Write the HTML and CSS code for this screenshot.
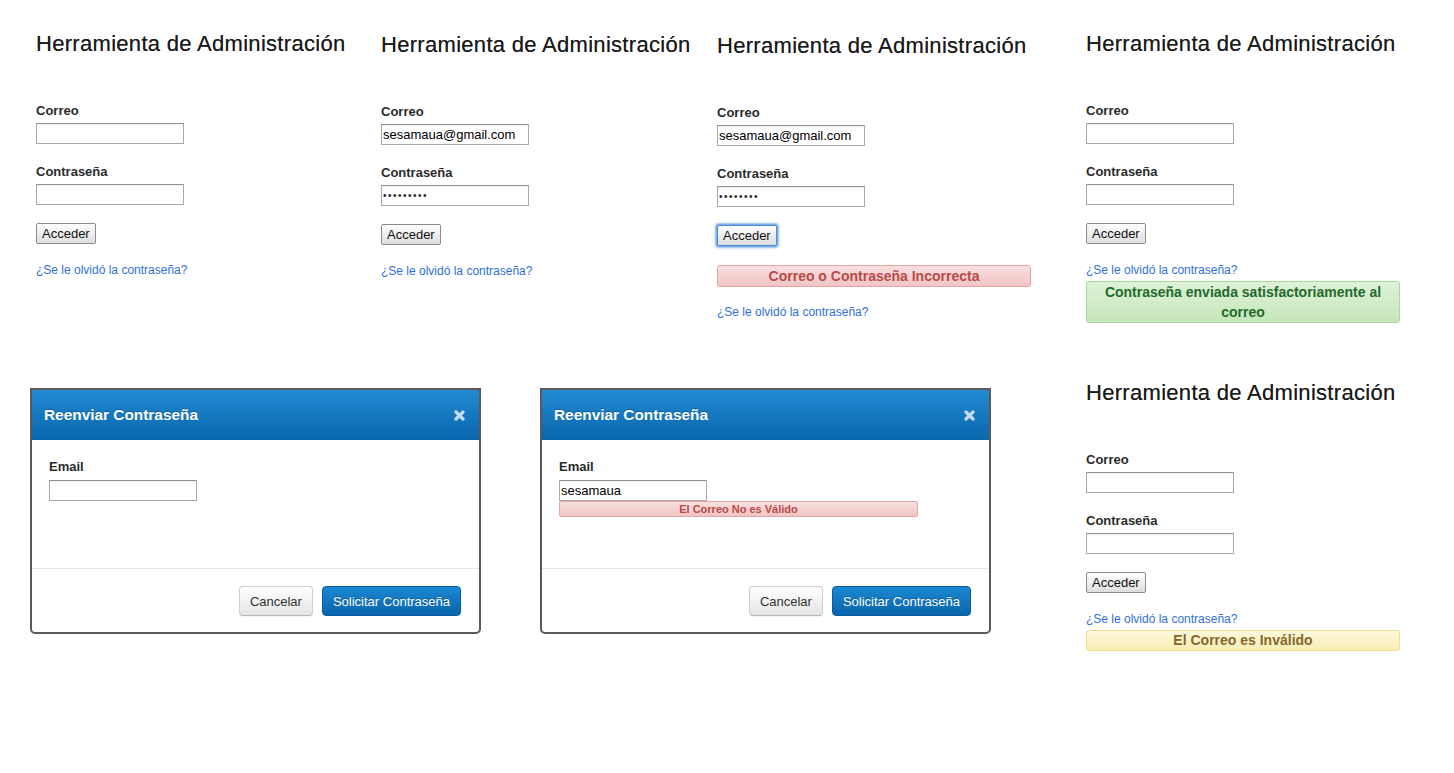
FILE: index.html
```html
<!DOCTYPE html>
<html lang="es">
<head>
<meta charset="utf-8">
<title>Herramienta de Administración</title>
<link rel="stylesheet" href="styles.css">
</head>
<body>
<div class="sheet">
  <div class="left">
    <div class="row-top">
      <section class="panel col-1">
        <h1 class="title">Herramienta de Administración</h1>
        <form class="login">
          <label class="label">Correo</label>
          <input class="field" type="text" value="">
          <label class="label">Contraseña</label>
          <input class="field" type="password" value="">
          <button class="btn-access" type="button">Acceder</button>
          <a class="link" href="#">¿Se le olvidó la contraseña?</a>
        </form>
      </section>
      <section class="panel col-2">
        <h1 class="title">Herramienta de Administración</h1>
        <form class="login">
          <label class="label">Correo</label>
          <input class="field" type="text" value="sesamaua@gmail.com">
          <label class="label">Contraseña</label>
          <input class="field" type="password" value="123456789">
          <button class="btn-access" type="button">Acceder</button>
          <a class="link" href="#">¿Se le olvidó la contraseña?</a>
        </form>
      </section>
      <section class="panel col-3">
        <h1 class="title">Herramienta de Administración</h1>
        <form class="login">
          <label class="label">Correo</label>
          <input class="field" type="text" value="sesamaua@gmail.com">
          <label class="label">Contraseña</label>
          <input class="field" type="password" value="12345678">
          <button class="btn-access is-focused" type="button">Acceder</button>
          <div class="alert alert-error">Correo o Contraseña Incorrecta</div>
          <a class="link link-after-alert" href="#">¿Se le olvidó la contraseña?</a>
        </form>
      </section>
    </div>
    <div class="modals">
      <div class="modal">
        <div class="modal-head">
          <h2 class="modal-title">Reenviar Contraseña</h2>
          <svg class="close" width="11" height="11" viewBox="0 0 11 11"><path d="M2 2 L9 9 M9 2 L2 9" stroke="#c3dcf1" stroke-width="3.2" stroke-linecap="round"/></svg>
        </div>
        <div class="modal-body">
          <label class="modal-label">Email</label>
          <input class="field" type="text" value="">
        </div>
        <div class="modal-footer">
          <button class="btn btn-default" type="button">Cancelar</button>
          <button class="btn btn-primary" type="button">Solicitar Contraseña</button>
        </div>
      </div>
      <div class="modal">
        <div class="modal-head">
          <h2 class="modal-title">Reenviar Contraseña</h2>
          <svg class="close" width="11" height="11" viewBox="0 0 11 11"><path d="M2 2 L9 9 M9 2 L2 9" stroke="#c3dcf1" stroke-width="3.2" stroke-linecap="round"/></svg>
        </div>
        <div class="modal-body">
          <label class="modal-label">Email</label>
          <input class="field" type="text" value="sesamaua">
          <div class="alert-mini">El Correo No es Válido</div>
        </div>
        <div class="modal-footer">
          <button class="btn btn-default" type="button">Cancelar</button>
          <button class="btn btn-primary" type="button">Solicitar Contraseña</button>
        </div>
      </div>
    </div>
  </div>
  <div class="right">
    <section class="panel col-4">
      <h1 class="title">Herramienta de Administración</h1>
      <form class="login">
        <label class="label">Correo</label>
        <input class="field" type="text" value="">
        <label class="label">Contraseña</label>
        <input class="field" type="password" value="">
        <button class="btn-access" type="button">Acceder</button>
        <a class="link" href="#">¿Se le olvidó la contraseña?</a>
        <div class="alert alert-success">Contraseña enviada satisfactoriamente al correo</div>
      </form>
    </section>
    <section class="panel col-5">
      <h1 class="title">Herramienta de Administración</h1>
      <form class="login">
        <label class="label">Correo</label>
        <input class="field" type="text" value="">
        <label class="label">Contraseña</label>
        <input class="field" type="password" value="">
        <button class="btn-access" type="button">Acceder</button>
        <a class="link" href="#">¿Se le olvidó la contraseña?</a>
        <div class="alert alert-warning">El Correo es Inválido</div>
      </form>
    </section>
  </div>
</div>
</body>
</html>
```

FILE: styles.css
```css
* { box-sizing: border-box; }

body {
  margin: 0;
  background: #fff;
  color: #333;
  font-family: "Liberation Sans", Arial, Helvetica, sans-serif;
}

.sheet { display: flex; align-items: flex-start; }
.left { width: 1086px; flex: none; }
.right { flex: 1; }

.row-top { display: flex; align-items: flex-start; }

.panel { padding-top: 31px; }
.col-1 { margin-left: 36px; width: 345px; }
.col-2 { width: 336px; padding-top: 32px; }
.col-3 { width: 369px; padding-top: 33px; }
.col-4 { padding-top: 31px; }
.col-5 { padding-top: 57px; }

.title {
  margin: 0;
  font-size: 22px;
  line-height: 26px;
  font-weight: normal;
  letter-spacing: 0.3px;
  color: #1a1a1a;
  text-shadow: 0 0 0.4px rgba(0,0,0,0.6);
}

.login { margin: 0; padding-top: 26px; }

.label {
  display: block;
  margin: 20px 0 4px;
  font-size: 13px;
  line-height: 16px;
  font-weight: bold;
  color: #2b2b2b;
}

.field {
  display: block;
  width: 148px;
  height: 21px;
  margin: 0;
  padding: 0 1px;
  border: 1px solid #a9a9a9;
  border-top-color: #919191;
  background: #fff;
  box-shadow: inset 0 1px 1px rgba(0,0,0,0.06);
  font: 13px "Liberation Sans", Arial, sans-serif;
  color: #000;
  outline: none;
}

.field[type="password"] {
  font-size: 10px;
  letter-spacing: 1.5px;
  color: #222;
}

.btn-access {
  display: block;
  margin-top: 18px;
  height: 21px;
  padding: 0 5px;
  border: 1px solid #8b8b8b;
  border-radius: 2px;
  background: linear-gradient(#fefefe, #dedede);
  font: 13px "Liberation Sans", Arial, sans-serif;
  color: #111;
}

.btn-access.is-focused {
  border-color: #4d8bd6;
  box-shadow: 0 0 0 1px #7db0ea, 0 0 2px 2px rgba(84,150,226,0.65);
}

.link {
  display: block;
  margin-top: 19px;
  font-size: 12px;
  line-height: 15px;
  color: #2f6fd7;
  text-decoration: none;
}

.link-after-alert { margin-top: 18px; }

.alert {
  width: 314px;
  border: 1px solid;
  border-radius: 3px;
  text-align: center;
  font-size: 14px;
  line-height: 20px;
  font-weight: bold;
}

.alert-error {
  margin-top: 19px;
  background: linear-gradient(#f9dfdf, #f1c5c5);
  border-color: #e6a5a5;
  color: #b94a48;
}

.alert-success {
  margin-top: 3px;
  padding: 0 16px;
  background: linear-gradient(#dff2d8, #c5e6b9);
  border-color: #a9da9c;
  color: #1f6a2b;
}

.alert-warning {
  margin-top: 3px;
  line-height: 19px;
  background: linear-gradient(#fdf8dc, #f8eeb6);
  border-color: #efdf8c;
  color: #86672b;
}

.modals {
  display: flex;
  gap: 59px;
  margin: 68px 0 0 30px;
}

.modal {
  width: 451px;
  border: 2px solid #5a5a5a;
  border-radius: 0 0 5px 5px;
  background: #fff;
  overflow: hidden;
}

.modal-head {
  height: 50px;
  display: flex;
  align-items: center;
  justify-content: space-between;
  padding: 0 14px 0 12px;
  background: linear-gradient(#218ad2, #0a67ad);
}

.modal-title {
  margin: 0;
  font-size: 15.4px;
  line-height: 20px;
  font-weight: bold;
  color: #fff;
  text-shadow: 0 -1px 0 rgba(0,0,0,0.25);
}

.close { display: block; }

.modal-body {
  height: 128px;
  padding: 19px 17px 0;
}

.modal-label {
  display: block;
  margin-bottom: 5px;
  font-size: 13px;
  line-height: 16px;
  font-weight: bold;
  color: #2b2b2b;
}

.alert-mini {
  width: 359px;
  border: 1px solid #e6a5a5;
  border-radius: 2px;
  background: linear-gradient(#f9dfdf, #f1c5c5);
  color: #b94a48;
  font-size: 11px;
  line-height: 14px;
  font-weight: bold;
  text-align: center;
}

.modal-footer {
  display: flex;
  justify-content: flex-end;
  gap: 9px;
  padding: 17px 18px 16px;
  border-top: 1px solid #e5e5e5;
}

.btn {
  height: 30px;
  padding: 0 10px;
  border: 1px solid;
  border-radius: 4px;
  font: 13px "Liberation Sans", Arial, sans-serif;
}

.btn-default {
  background: linear-gradient(#ffffff, #e4e4e4);
  border-color: #cfcfcf #cfcfcf #b5b5b5;
  color: #333;
  box-shadow: 0 1px 1px rgba(0,0,0,0.05);
}

.btn-primary {
  background: linear-gradient(#1b88d3, #0a65ab);
  border-color: #0b5c9d;
  color: #fff;
  text-shadow: 0 -1px 0 rgba(0,0,0,0.25);
}
```
